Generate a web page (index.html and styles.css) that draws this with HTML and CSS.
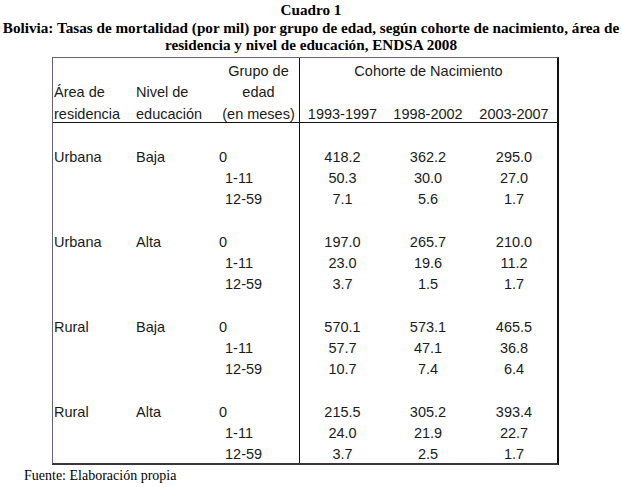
FILE: index.html
```html
<!DOCTYPE html>
<html lang="es">
<head>
<meta charset="utf-8">
<title>Cuadro 1</title>
<link rel="stylesheet" href="styles.css">
</head>
<body>
<div class="title">
  <div>Cuadro 1</div>
  <div>Bolivia: Tasas de mortalidad (por mil) por grupo de edad, según cohorte de nacimiento, área de residencia y nivel de educación, ENDSA 2008</div>
</div>
<table class="data">
  <colgroup>
    <col class="c-area"><col class="c-nivel"><col class="c-grupo"><col class="c-num"><col class="c-num"><col class="c-num">
  </colgroup>
  <thead>
    <tr><td></td><td></td><td class="ctr">Grupo de</td><td class="div ctr" colspan="3">Cohorte de Nacimiento</td></tr>
    <tr><td>Área de</td><td>Nivel de</td><td class="ctr">edad</td><td class="div"></td><td></td><td></td></tr>
    <tr class="hlast"><td>residencia</td><td>educación</td><td class="ctr">(en meses)</td><td class="div ctr">1993-1997</td><td class="ctr">1998-2002</td><td class="ctr">2003-2007</td></tr>
  </thead>
  <tbody>
    <tr><td></td><td></td><td></td><td class="div"></td><td></td><td></td></tr>
    <tr><td>Urbana</td><td>Baja</td><td>0</td><td class="div num">418.2</td><td class="num">362.2</td><td class="num">295.0</td></tr>
    <tr><td></td><td></td><td class="ind">1-11</td><td class="div num">50.3</td><td class="num">30.0</td><td class="num">27.0</td></tr>
    <tr><td></td><td></td><td class="ind">12-59</td><td class="div num">7.1</td><td class="num">5.6</td><td class="num">1.7</td></tr>
    <tr><td></td><td></td><td></td><td class="div"></td><td></td><td></td></tr>
    <tr><td>Urbana</td><td>Alta</td><td>0</td><td class="div num">197.0</td><td class="num">265.7</td><td class="num">210.0</td></tr>
    <tr><td></td><td></td><td class="ind">1-11</td><td class="div num">23.0</td><td class="num">19.6</td><td class="num">11.2</td></tr>
    <tr><td></td><td></td><td class="ind">12-59</td><td class="div num">3.7</td><td class="num">1.5</td><td class="num">1.7</td></tr>
    <tr><td></td><td></td><td></td><td class="div"></td><td></td><td></td></tr>
    <tr><td>Rural</td><td>Baja</td><td>0</td><td class="div num">570.1</td><td class="num">573.1</td><td class="num">465.5</td></tr>
    <tr><td></td><td></td><td class="ind">1-11</td><td class="div num">57.7</td><td class="num">47.1</td><td class="num">36.8</td></tr>
    <tr><td></td><td></td><td class="ind">12-59</td><td class="div num">10.7</td><td class="num">7.4</td><td class="num">6.4</td></tr>
    <tr><td></td><td></td><td></td><td class="div"></td><td></td><td></td></tr>
    <tr><td>Rural</td><td>Alta</td><td>0</td><td class="div num">215.5</td><td class="num">305.2</td><td class="num">393.4</td></tr>
    <tr><td></td><td></td><td class="ind">1-11</td><td class="div num">24.0</td><td class="num">21.9</td><td class="num">22.7</td></tr>
    <tr><td></td><td></td><td class="ind">12-59</td><td class="div num">3.7</td><td class="num">2.5</td><td class="num">1.7</td></tr>
  </tbody>
</table>
<div class="source">Fuente: Elaboración propia</div>
</body>
</html>
```
FILE: styles.css
```css
html, body {
  margin: 0;
  padding: 0;
  background: #ffffff;
}
body {
  width: 622px;
  color: #000000;
}
.title {
  font-family: "Liberation Serif", "Times New Roman", serif;
  font-weight: bold;
  font-size: 15.2px;
  line-height: 17.5px;
  text-align: center;
  padding: 1px 0 0 0;
  height: 57px;
  box-sizing: border-box;
}
.data {
  margin-left: 52px;
  width: 505px;
  table-layout: fixed;
  border-collapse: separate;
  border-spacing: 0;
  border-left: 1px solid #6a6272;
  border-top: 1px solid #6a6272;
  border-right: 2px solid #111111;
  border-bottom: 2px solid #3a3440;
  font-family: "Liberation Sans", Arial, sans-serif;
  font-size: 14.5px;
  color: #1a1a1a;
}
.c-area { width: 82px; }
.c-nivel { width: 83px; }
.c-grupo { width: 81px; }
.c-num { width: 86px; }
.data td {
  box-sizing: border-box;
  height: 21.25px;
  padding: 5px 0 0 1px;
  line-height: 16px;
  white-space: nowrap;
  vertical-align: top;
}
.data thead td {
  height: 21.33px;
}
.data td.div {
  border-left: 1px solid #111111;
}
.data tr.hlast td {
  border-bottom: 1px solid #111111;
}
.data td.ctr,
.data td.num {
  text-align: center;
  padding-left: 0;
}
.data td.ind {
  padding-left: 7px;
}
.source {
  font-family: "Liberation Serif", "Times New Roman", serif;
  font-size: 14px;
  line-height: 16px;
  margin: 3px 0 0 24px;
}
```
